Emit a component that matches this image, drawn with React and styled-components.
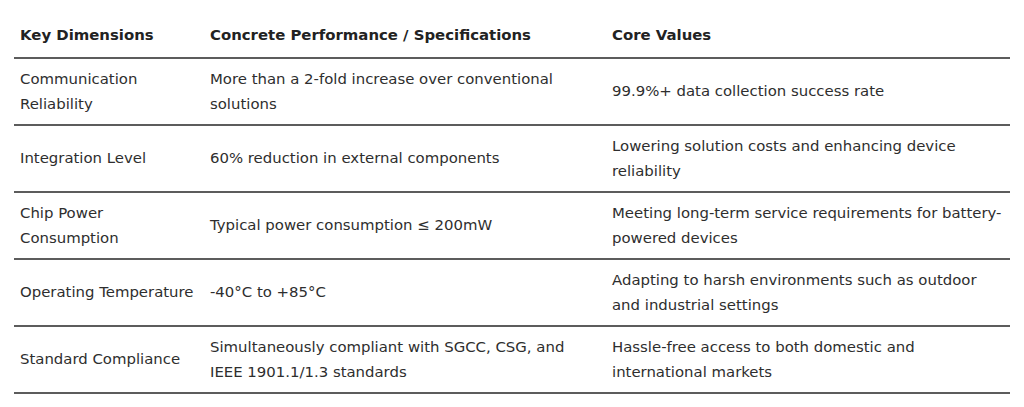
import React from "react";
import styled, { createGlobalStyle } from "styled-components";

const GlobalStyle = createGlobalStyle`
	html, body {
		margin: 0;
		padding: 0;
		background: #ffffff;
	}
	body {
		font-family: "DejaVu Sans", Verdana, sans-serif;
		color: #333333;
	}
`;

const Page = styled.div`
	padding: 14px 14px 0 14px;
	width: 996px;
`;

const Table = styled.table`
	width: 996px;
	border-collapse: collapse;
	table-layout: fixed;
	font-size: 14.9px;
	line-height: 25px;
`;

const HeadCell = styled.th`
	text-align: left;
	font-weight: bold;
	color: #222222;
	height: 43px;
	padding: 0 4px 0 6px;
	vertical-align: middle;
	border-bottom: 2px solid #5c5c5c;
	white-space: nowrap;
`;

const Row = styled.tr`
	border-bottom: 2px solid #5c5c5c;
`;

const Cell = styled.td`
	height: 65px;
	padding: 0 ${(p) => p.$padRight}px 0 6px;
	vertical-align: middle;
	color: #2e2e2e;
`;

const columns = [
	{ title: "Key Dimensions", width: 190, padRight: 2 },
	{ title: "Concrete Performance / Specifications", width: 402, padRight: 26 },
	{ title: "Core Values", width: 404, padRight: 5 },
];

const rows = [
	[
		"Communication Reliability",
		"More than a 2-fold increase over conventional solutions",
		"99.9%+ data collection success rate",
	],
	[
		"Integration Level",
		"60% reduction in external components",
		"Lowering solution costs and enhancing device reliability",
	],
	[
		"Chip Power Consumption",
		"Typical power consumption ≤ 200mW",
		"Meeting long-term service requirements for battery-powered devices",
	],
	[
		"Operating Temperature",
		"-40°C to +85°C",
		"Adapting to harsh environments such as outdoor and industrial settings",
	],
	[
		"Standard Compliance",
		"Simultaneously compliant with SGCC, CSG, and IEEE 1901.1/1.3 standards",
		"Hassle-free access to both domestic and international markets",
	],
];

export default function App() {
	return (
		<>
			<GlobalStyle />
			<Page>
				<Table>
					<colgroup>
						{columns.map((c) => (
							<col key={c.title} style={{ width: c.width }} />
						))}
					</colgroup>
					<thead>
						<tr>
							{columns.map((c) => (
								<HeadCell key={c.title}>{c.title}</HeadCell>
							))}
						</tr>
					</thead>
					<tbody>
						{rows.map((r) => (
							<Row key={r[0]}>
								{r.map((text, i) => (
									<Cell key={i} $padRight={columns[i].padRight}>
										{text}
									</Cell>
								))}
							</Row>
						))}
					</tbody>
				</Table>
			</Page>
		</>
	);
}
